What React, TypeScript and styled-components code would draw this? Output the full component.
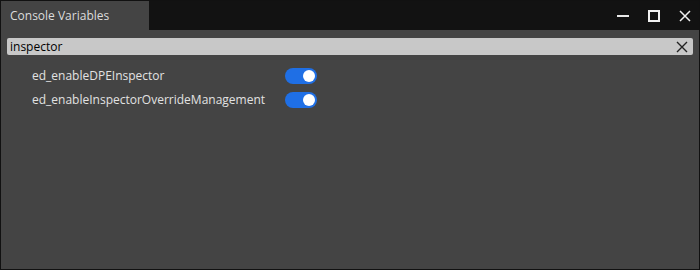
import React from "react";
import styled, { createGlobalStyle } from "styled-components";

const Global = createGlobalStyle`
  html, body { margin: 0; padding: 0; background: #000; }
  body { font-family: "Open Sans", "Noto Sans", sans-serif; }
`;

const Window = styled.div`
  width: 700px;
  height: 270px;
  box-sizing: border-box;
  border: 1px solid #111;
  background: #444444;
  display: flex;
  flex-direction: column;
`;

const TitleBar = styled.div`
  height: 29px;
  background: #121212;
  display: flex;
  align-items: stretch;
`;

const Tab = styled.div`
  width: 148px;
  background: #444444;
  color: #dcdcdc;
  font-size: 12px;
  display: flex;
  align-items: center;
  padding-left: 9px;
  box-sizing: border-box;
`;

const Controls = styled.div`
  margin-left: auto;
  display: flex;
  align-items: center;
  gap: 19px;
  padding-right: 8px;
`;

const CtrlButton = styled.div`
  width: 12px;
  height: 29px;
  display: flex;
  align-items: center;
  justify-content: center;
  color: #f0f0f0;
`;

const Body = styled.div`
  flex: 1;
  padding: 8px 6px 0 6px;
  display: flex;
  flex-direction: column;
`;

const Search = styled.div`
  height: 17px;
  background: #c8c8c8;
  border-radius: 2px;
  display: flex;
  align-items: center;
  padding: 0 5px 0 3px;
  color: #000;
  font-size: 12px;
`;

const SearchText = styled.span`
  flex: 1;
  line-height: 17px;
`;

const List = styled.div`
  display: flex;
  flex-direction: column;
  padding: 12px 0 0 25px;
  gap: 8px;
`;

const Row = styled.div`
  display: grid;
  grid-template-columns: 253px auto;
  align-items: center;
  height: 16px;
`;

const Label = styled.span`
  color: #e2e2e2;
  font-size: 12px;
`;

const Toggle = styled.div<{ $on: boolean }>`
  width: 32px;
  height: 16px;
  border-radius: 8px;
  background: ${(p) => (p.$on ? "#1f6fe5" : "#777")};
  position: relative;
  &::after {
    content: "";
    position: absolute;
    top: 2px;
    left: ${(p) => (p.$on ? "18px" : "2px")};
    width: 12px;
    height: 12px;
    border-radius: 50%;
    background: #fff;
  }
`;

const XIcon = ({ size = 12, stroke = "#f0f0f0", w = 1.5 }: { size?: number; stroke?: string; w?: number }) => (
  <svg width={size} height={size} viewBox="0 0 12 12">
    <path d="M1 1 L11 11 M11 1 L1 11" stroke={stroke} strokeWidth={w} fill="none" />
  </svg>
);

const vars = ["ed_enableDPEInspector", "ed_enableInspectorOverrideManagement"];

export default function App() {
  return (
    <>
      <Global />
      <Window>
        <TitleBar>
          <Tab>Console Variables</Tab>
          <Controls>
            <CtrlButton>
              <svg width="12" height="12" viewBox="0 0 12 12">
                <rect x="0" y="5" width="12" height="2" fill="#e8e8e8" />
              </svg>
            </CtrlButton>
            <CtrlButton>
              <svg width="12" height="12" viewBox="0 0 12 12">
                <rect x="1" y="1" width="10" height="10" stroke="#f0f0f0" strokeWidth="2" fill="none" />
              </svg>
            </CtrlButton>
            <CtrlButton>
              <XIcon />
            </CtrlButton>
          </Controls>
        </TitleBar>
        <Body>
          <Search>
            <SearchText>inspector</SearchText>
            <XIcon size={12} stroke="#222" w={1.4} />
          </Search>
          <List>
            {vars.map((v) => (
              <Row key={v}>
                <Label>{v}</Label>
                <Toggle $on />
              </Row>
            ))}
          </List>
        </Body>
      </Window>
    </>
  );
}
